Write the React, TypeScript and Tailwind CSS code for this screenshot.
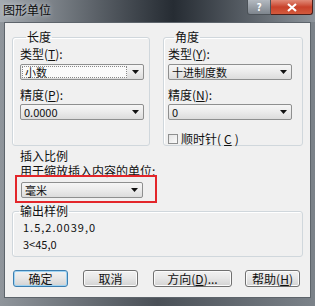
const FONT = "font-['Noto_Sans_CJK_SC','Liberation_Sans',sans-serif]";

function Combo({ value, focus = false, className = '' }: { value: string; focus?: boolean; className?: string }) {
  return (
    <div
      className={`flex h-[16px] items-center rounded-[2px] border border-[#8e8f8f] bg-gradient-to-b from-[#f6f6f6] via-[#ebebeb] to-[#dcdcdc] text-[11px] leading-none text-[#111] ${className}`}
    >
      <div className={`ml-[1px] flex h-[12px] flex-1 items-center pl-[2px] ${focus ? 'border border-dotted border-[#888] bg-[#fafafa]' : ''}`}>
        {value}
      </div>
      <div className="flex w-[16px] items-center justify-center">
        <svg width="7" height="4" viewBox="0 0 7 4">
          <path d="M0 0h7L3.5 4z" fill="#111" />
        </svg>
      </div>
    </div>
  );
}

function Btn({ children, primary = false, className = '' }: { children: React.ReactNode; primary?: boolean; className?: string }) {
  return (
    <div
      className={`flex h-[17px] items-center justify-center rounded-[3px] border text-[12px] leading-none text-[#111] bg-gradient-to-b from-[#f2f2f2] via-[#e6e6e6] to-[#d2d2d2] ${
        primary ? 'border-[#3c7fb1] shadow-[inset_0_0_0_1px_#9fd3f2]' : 'border-[#707070] shadow-[inset_0_0_0_1px_#fbfbfb]'
      } ${className}`}
    >
      {children}
    </div>
  );
}

function Group({ title, className = '', children }: { title: string; className?: string; children?: React.ReactNode }) {
  return (
    <fieldset className={`rounded-[3px] border border-[#d0d7dc] shadow-[inset_1px_1px_0_#fff] ${className}`}>
      <legend className="ml-[6px] px-[1px] text-[12px] leading-[10px] text-[#111]">{title}</legend>
      {children}
    </fieldset>
  );
}

export default function App() {
  return (
    <div className={`flex h-[306px] w-[315px] flex-col bg-gradient-to-r from-[#8f959b] via-[#4a5057] to-[#7c838a] ${FONT}`}>
      {/* title bar */}
      <div className="flex h-[22px] items-start bg-gradient-to-r from-[#a5abb1] via-[#262c33] via-55% to-[#8d949b]">
        <div className="pl-[3px] pt-[3px] text-[12px] leading-[14px] text-[#0b0b0b] [text-shadow:0_0_4px_#d8dde2]">图形单位</div>
        <div className="ml-auto mr-[2px] flex">
          <div className="flex h-[15px] w-[24px] items-center justify-center rounded-bl-[3px] border border-t-0 border-[#4c5258] bg-gradient-to-b from-[#b3b9c0] to-[#7e858d] text-[10px] font-bold leading-none text-white">
            ?
          </div>
          <div className="flex h-[15px] w-[42px] items-center justify-center rounded-br-[3px] border border-l-0 border-t-0 border-[#4c1f1a] bg-gradient-to-b from-[#e08a78] via-[#c8412a] to-[#d35a3d]">
            <svg width="10" height="9" viewBox="0 0 10 9">
              <path d="M1 1l8 7M9 1L1 8" stroke="#fff" strokeWidth="2.2" />
            </svg>
          </div>
        </div>
      </div>

      {/* client area */}
      <div className="mx-[4px] mb-[8px] flex flex-1 flex-col border border-[#5d646b] bg-[#f0f0f0] pl-[7px] pr-[7px]">
        <div className="mt-[9px] flex gap-[13px]">
          <Group title="长度" className="h-[114px] w-[138px] pl-[7px]">
            <div className="mt-[6px] text-[12px] leading-[12px] text-[#111]">
              类型(<u>T</u>):
            </div>
            <Combo value="小数" focus className="mt-[4px] w-[124px]" />
            <div className="mt-[9px] text-[12px] leading-[12px] text-[#111]">
              精度(<u>P</u>):
            </div>
            <Combo value="0.0000" className="mt-[3px] w-[124px]" />
          </Group>
          <Group title="角度" className="h-[114px] w-[140px] pl-[4px]">
            <div className="mt-[6px] text-[12px] leading-[12px] text-[#111]">
              类型(<u>Y</u>):
            </div>
            <Combo value="十进制度数" className="mt-[4px] w-[124px]" />
            <div className="mt-[9px] text-[12px] leading-[12px] text-[#111]">
              精度(<u>N</u>):
            </div>
            <Combo value="0" className="mt-[3px] w-[124px]" />
            <div className="mt-[13px] flex items-center gap-[3px] text-[12px] leading-[12px] text-[#111]">
              <div className="h-[10px] w-[10px] border border-[#8e8f8f] bg-gradient-to-br from-[#e4e4e4] to-[#fafafa]" />
              顺时针(<u>C</u>)
            </div>
          </Group>
        </div>

        <div className="mt-[2px] pl-[8px] text-[12px] leading-[15px] text-[#111]">
          插入比例
          <br />
          用于缩放插入内容的单位:
        </div>
        <div className="-mt-[3px] ml-[3px] w-[142px] border-2 border-[#e3262a] px-[4px] pb-[3px] pt-[5px]">
          <Combo value="毫米" className="w-[122px]" />
        </div>

        <Group title="输出样例" className="mt-[3px] h-[51px] w-[291px]">
          <div className="ml-[10px] mt-[5px] text-[11px] leading-[12px] tracking-[1px] text-[#111]">1.5,2.0039,0</div>
          <div className="ml-[10px] mt-[5px] text-[11px] leading-[12px] text-[#111]">3&lt;45,0</div>
        </Group>

        <div className="mt-[13px] flex">
          <Btn primary className="ml-[1px] w-[55px]">确定</Btn>
          <Btn className="ml-[15px] w-[55px]">取消</Btn>
          <Btn className="ml-[15px] w-[79px]">
            方向(<u>D</u>)...
          </Btn>
          <Btn className="ml-[13px] w-[55px]">
            帮助(<u>H</u>)
          </Btn>
        </div>
      </div>
    </div>
  );
}
